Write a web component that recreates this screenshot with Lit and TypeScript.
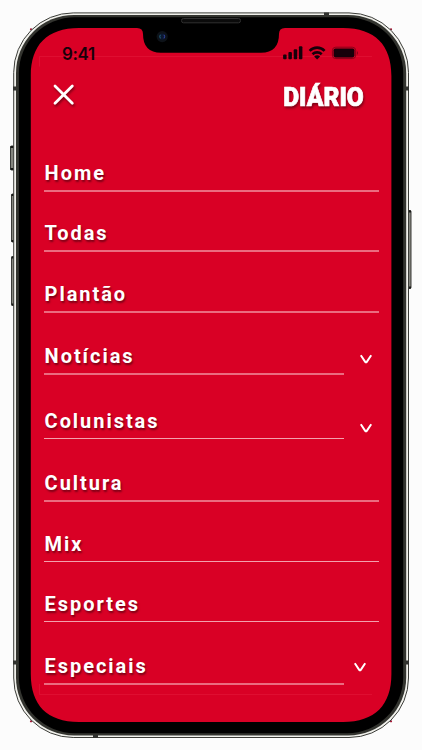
import { LitElement, html, svg, css, nothing } from "lit";
import { customElement } from "lit/decorators.js";
import { classMap } from "lit/directives/class-map.js";

interface Entry { label: string; height: number; expand?: boolean; right?: number; drop?: number; fine?: boolean }

const entries: Entry[] = [
  { label: "Home", height: 60 },
  { label: "Todas", height: 60 },
  { label: "Plantão", height: 61 },
  { label: "Notícias", height: 62, expand: true, right: 6, drop: 11 },
  { label: "Colunistas", height: 64, expand: true, right: 6, drop: 6, fine: true },
  { label: "Cultura", height: 63 },
  { label: "Mix", height: 60, fine: true },
  { label: "Esportes", height: 60, fine: true },
  { label: "Especiais", height: 63, expand: true, right: 12, drop: 13 },
];

@customElement("phone-frame")
class PhoneFrame extends LitElement {
  static styles = css`
    :host { display: block; width: 422px; height: 750px; }
    svg { display: block; }
  `;
  render() {
    const button = (x: number, y: number, w: number, h: number) => svg`
      <rect x=${x} y=${y} width=${w} height=${h} rx="1" fill="#85867f" stroke="#3a3b38" stroke-width="1"/>
      <path d="M${x} ${y + 1}h${w}M${x} ${y + h - 1}h${w}" stroke="#171816" stroke-width="2"/>`;
    return html`<svg width="422" height="750" viewBox="0 0 422 750">
      ${button(10.5, 146, 4, 24)}
      ${button(11.5, 194, 3, 48)}
      ${button(11.5, 256.5, 3, 49)}
      ${button(408, 210.5, 3, 78)}
      <circle cx="31" cy="29.3" r="1.1" fill="#a01030"/>
      <circle cx="391" cy="29.3" r="1.1" fill="#a01030"/>
      <circle cx="31" cy="721.3" r="1.1" fill="#a01030"/>
      <circle cx="391" cy="721.3" r="1.1" fill="#a01030"/>
      <rect x="13.7" y="12.9" width="394.8" height="724.6" rx="59.5" fill="#f1f1ec" stroke="#3c3d39" stroke-width="1"/>
      <rect x="16" y="14.9" width="390.2" height="720.6" rx="58" fill="#33342f"/>
      <rect x="18.9" y="17.2" width="384.3" height="716" rx="56" fill="#000"/>
      <path d="M13 88.5h3M406 88.5h3M13 662.5h3M406 662.5h3" stroke="#30312e" stroke-width="4"/>
      <path d="M326.5 12.5v3M95.5 735v3" stroke="#30312e" stroke-width="5"/>
      <path d="M79 28H137Q143 28 143 34Q143 52.7 161 52.7H261Q279 52.7 279 34Q279 28 285 28H343C375 28 391.4 45 391.4 76V674C391.4 705 375 722 343 722H79C47 722 30.8 705 30.8 674V76C30.8 45 47 28 79 28Z" fill="#d90025"/>
      <path d="M39.5 66.5V56.5H372M39.5 684V694.5H372" fill="none" stroke="#e2183a" stroke-opacity=".6"/>
      <rect x="181.5" y="18.5" width="59" height="4.3" rx="2" fill="#0b0b0b" stroke="#303030" stroke-width="1"/>
      <circle cx="162.2" cy="36.6" r="5.6" fill="#0d1218"/>
      <circle cx="162.2" cy="36.6" r="3.2" fill="#0c1830"/>
      <path d="M160.4 34.8q-1.3 1.6 0 3.6" stroke="#266779" fill="none"/>
      <path d="M164 34.8q1.3 1.6 0 3.6" stroke="#3546a8" fill="none"/>
    </svg>`;
  }
}

@customElement("status-bar")
class StatusBar extends LitElement {
  static styles = css`
    :host { display: flex; justify-content: space-between; align-items: flex-start; box-sizing: border-box; height: 32px; padding: 0 32px 0 31px; color: #17000a; }
    .time { font: 600 17px/20px Inter, sans-serif; letter-spacing: -0.4px; padding-top: 4px; }
    svg { display: block; margin-top: 5px; }
  `;
  render() {
    return html`<span class="time">9:41</span>
      <svg width="78" height="18" viewBox="281 45 78 18" fill="#17000a">
        <rect x="283.1" y="54.4" width="3.5" height="4.9" rx="1"/>
        <rect x="288.4" y="52.1" width="3.5" height="7.2" rx="1"/>
        <rect x="293.7" y="49.3" width="3.5" height="10" rx="1"/>
        <rect x="298.9" y="46.3" width="3.5" height="13" rx="1"/>
        <path d="M309.6 50.8a10.5 10.5 0 0 1 15 0M312.5 54.2a6.6 6.6 0 0 1 9.2 0" fill="none" stroke="#17000a" stroke-width="2.6"/>
        <path d="M314.1 56.5q3-2.4 6 0l-3 3z"/>
        <rect x="332.4" y="47.2" width="23.3" height="11.4" rx="3.4" fill="none" stroke="#850018" stroke-width="1"/>
        <rect x="333.6" y="48.4" width="20.8" height="9" rx="1.8"/>
        <path d="M357 51q2 2 0 4z" fill="#850018"/>
      </svg>`;
  }
}

@customElement("menu-entry")
class MenuEntry extends LitElement {
  static properties = { entry: { attribute: false } };
  declare entry: Entry;
  static styles = css`
    :host { display: flex; box-sizing: border-box; }
    .cell { box-sizing: border-box; flex: 1; display: flex; align-items: flex-end; border-bottom: 2px solid #eb6c80; padding: 0 0 5px 0.6px; }
    .fine { border-bottom: 1px solid #f3a0ad; }
    .label { font: 700 20px/24px Roboto, sans-serif; letter-spacing: 1.95px; color: #fff; text-shadow: 1px 2px 2px rgba(60, 0, 12, .6); }
    .toggle { box-sizing: border-box; width: 35px; display: flex; justify-content: flex-end; align-items: flex-end; }
  `;
  render() {
    const e = this.entry;
    return html`<div class=${classMap({ cell: true, fine: !!e.fine })}><span class="label">${e.label}</span></div>
      ${e.expand ? html`<div class="toggle" style="padding-right:${e.right}px;padding-bottom:${e.drop}px">
        <svg width="14" height="10" viewBox="0 0 14 10"><path d="M1.8 1.2L6.2 7.8Q7 8.8 7.8 7.8L12.2 1.2" fill="none" stroke="#fff" stroke-width="2"/></svg>
      </div>` : nothing}`;
  }
}

@customElement("app-root")
class AppRoot extends LitElement {
  static styles = css`
    :host { display: grid; width: 422px; height: 750px; background: #fcfcfc; overflow: hidden; }
    phone-frame, .screen { grid-area: 1 / 1; }
    .screen { margin: 40px 31px 28px; display: flex; flex-direction: column; }
    .top { display: flex; justify-content: space-between; align-items: flex-start; height: 52px; padding: 8px 22px 0 19px; }
    .top svg { overflow: visible; filter: drop-shadow(1px 2px 1px rgba(70, 0, 12, .6)); }
    .brand { font: 900 26px Roboto, sans-serif; }
    .menu { display: flex; flex-direction: column; padding: 0 12px 0 13px; }
  `;
  render() {
    return html`<phone-frame></phone-frame>
      <div class="screen">
        <status-bar></status-bar>
        <div class="top">
          <svg width="28" height="30" viewBox="50 80 28 30"><path d="M55 86L72.3 103.3M72.3 86L55 103.3" stroke="#fff" stroke-width="2.8" stroke-linecap="round"/></svg>
          <svg width="88" height="40" viewBox="281 80 88 40"><text class="brand" x="283.2" y="105.6" fill="#fff" stroke="#fff" stroke-width=".7" textLength="80.6" lengthAdjust="spacingAndGlyphs">DIÁRIO</text></svg>
        </div>
        <nav class="menu">
          ${entries.map(e => html`<menu-entry .entry=${e} style="height:${e.height}px"></menu-entry>`)}
        </nav>
      </div>`;
  }
}
